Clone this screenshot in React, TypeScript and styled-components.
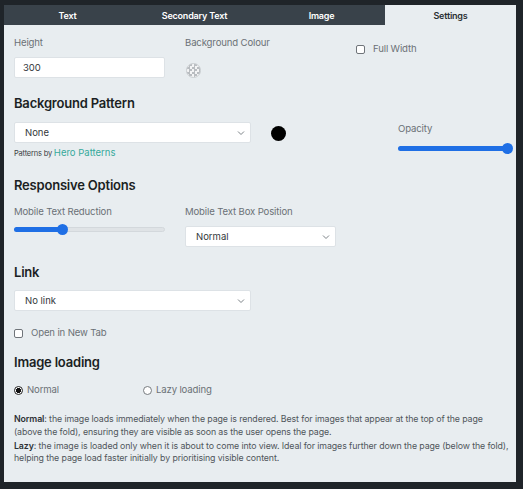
import { createGlobalStyle, styled } from 'styled-components';

const Global = createGlobalStyle`
  html, body { margin: 0; padding: 0; background: #1f2429; }
  body { font-family: Inter, 'Noto Sans', sans-serif; -webkit-font-smoothing: antialiased; }
  * { box-sizing: border-box; }
`;

const Page = styled.div`
  width: 523px;
  height: 489px;
  padding: 5px 7px 0 4px;
`;

const Panel = styled.div`
  background: #e8edf0;
  width: 512px;
  height: 477px;
`;

const Tabs = styled.div`
  display: flex;
  height: 20px;
  background: #39424a;
`;

const Tab = styled.div<{ $active?: boolean }>`
  flex: ${p => (p.$active ? '0 0 131px' : '1')};
  display: flex;
  align-items: center;
  justify-content: center;
  font-size: 9px;
  font-weight: 600;
  letter-spacing: -0.2px;
  color: ${p => (p.$active ? '#2a2f33' : '#ffffff')};
  background: ${p => (p.$active ? '#e8edf0' : 'transparent')};
`;

const Body = styled.div`
  padding: 11px 8px 0 10px;
`;

const Row = styled.div<{ $mt?: number }>`
  display: flex;
  align-items: flex-start;
  margin-top: ${p => p.$mt ?? 0}px;
`;

const Field = styled.div<{ $w: number; $ml?: number }>`
  width: ${p => p.$w}px;
  margin-left: ${p => p.$ml ?? 0}px;
  display: flex;
  flex-direction: column;
`;

const Label = styled.div`
  font-size: 9.6px;
  line-height: 14px;
  color: #6b7176;
  letter-spacing: -0.15px;
  margin-bottom: 7px;
`;

const TextInput = styled.div`
  height: 21px;
  background: #fff;
  border: 1px solid #dde2e6;
  border-radius: 2px;
  font-size: 9.5px;
  color: #33383c;
  display: flex;
  align-items: center;
  padding-left: 8px;
`;

const Swatch = styled.div`
  width: 15px;
  height: 15px;
  margin: 6px 0 0 1px;
  border-radius: 50%;
  border: 1px solid #c9cdd0;
  background: repeating-conic-gradient(#b9bdc1 0 25%, #f3f4f5 0 50%) 0 0 / 5px 5px;
`;

const Dot = styled.div`
  width: 15px;
  height: 15px;
  border-radius: 50%;
  background: #000;
  margin: 4px 0 0 20px;
`;

const Heading = styled.div<{ $mt: number }>`
  font-size: 13px;
  font-weight: 600;
  line-height: 20px;
  color: #1b1f23;
  letter-spacing: -0.2px;
  margin-top: ${p => p.$mt}px;
`;

const Select = styled.div<{ $w: number }>`
  width: ${p => p.$w}px;
  height: 21px;
  background: #fff;
  border: 1px solid #dde2e6;
  border-radius: 2px;
  display: flex;
  align-items: center;
  justify-content: space-between;
  padding: 0 5px 0 10px;
  font-size: 9.5px;
  color: #33383c;
`;

const Chevron = () => (
  <svg width="8" height="6" viewBox="0 0 8 6">
    <path d="M1 1.5 L4 4.5 L7 1.5" fill="none" stroke="#7d8388" strokeWidth="1" />
  </svg>
);

const Credit = styled.div`
  margin-top: 4px;
  font-size: 7.5px;
  line-height: 12px;
  color: #3a3f44;
  letter-spacing: -0.2px;
  span { color: #35a99b; font-size: 9.5px; letter-spacing: 0; }
`;

const Track = styled.div<{ $w: number }>`
  position: relative;
  width: ${p => p.$w}px;
  height: 5px;
  border-radius: 3px;
  background: #dfe3e6;
  border: 1px solid #d3d8dc;
`;

const Fill = styled.div`
  position: absolute;
  left: -1px;
  top: -1px;
  height: 5px;
  border-radius: 3px;
  background: #1f6fe5;
`;

const Thumb = styled.div`
  position: absolute;
  top: -4.5px;
  width: 11px;
  height: 11px;
  margin-left: -5.5px;
  border-radius: 50%;
  background: #1f6fe5;
`;

const SliderWrap = styled.div<{ $mt: number }>`
  margin-top: ${p => p.$mt}px;
`;

const Slider = ({ w, pct, mt }: { w: number; pct: number; mt: number }) => (
  <SliderWrap $mt={mt}>
    <Track $w={w}>
      <Fill style={{ width: `${pct}%` }} />
      <Thumb style={{ left: `${pct}%` }} />
    </Track>
  </SliderWrap>
);

const Check = styled.span`
  display: inline-block;
  width: 9px;
  height: 9px;
  border: 1px solid #6f7479;
  border-radius: 2px;
  background: #fff;
`;

const Choice = styled.label<{ $w?: number; $gap?: number; $mt?: number }>`
  display: flex;
  align-items: center;
  gap: ${p => p.$gap ?? 8}px;
  width: ${p => (p.$w ? `${p.$w}px` : 'auto')};
  margin-top: ${p => p.$mt ?? 0}px;
  font-size: 9.6px;
  line-height: 14px;
  color: #6b7176;
  letter-spacing: -0.15px;
`;

const Radio = styled.span<{ $on?: boolean }>`
  display: inline-block;
  width: 9px;
  height: 9px;
  border-radius: 50%;
  border: 1px solid ${p => (p.$on ? '#222' : '#777c80')};
  background: ${p => (p.$on ? 'radial-gradient(circle, #111 0 2.3px, #fff 2.8px)' : '#fff')};
`;

const Notes = styled.div`
  width: 500px;
  margin-top: 16px;
  font-size: 8.8px;
  line-height: 12.5px;
  color: #50565b;
  letter-spacing: -0.1px;
  p { margin: 0 0 1.5px; }
  b { color: #2c3135; font-weight: 600; }
`;

export default function App() {
  return (
    <Page>
      <Global />
      <Panel>
        <Tabs>
          <Tab>Text</Tab>
          <Tab>Secondary Text</Tab>
          <Tab>Image</Tab>
          <Tab $active>Settings</Tab>
        </Tabs>
        <Body>
          <Row>
            <Field $w={151}>
              <Label>Height</Label>
              <TextInput>300</TextInput>
            </Field>
            <Field $w={151} $ml={20}>
              <Label>Background Colour</Label>
              <Swatch />
            </Field>
            <Field $w={140} $ml={20}>
              <Choice $mt={6}>
                <Check />
                Full Width
              </Choice>
            </Field>
          </Row>

          <Heading $mt={15}>Background Pattern</Heading>
          <Row $mt={9}>
            <Field $w={237}>
              <Select $w={237}>
                None
                <Chevron />
              </Select>
              <Credit>
                Patterns by <span>Hero Patterns</span>
              </Credit>
            </Field>
            <Dot />
            <Field $w={110} $ml={112}>
              <Label>Opacity</Label>
              <Slider w={110} pct={100} mt={3} />
            </Field>
          </Row>

          <Heading $mt={15}>Responsive Options</Heading>
          <Row $mt={10}>
            <Field $w={151}>
              <Label>Mobile Text Reduction</Label>
              <Slider w={151} pct={32} mt={1} />
            </Field>
            <Field $w={151} $ml={20}>
              <Label>Mobile Text Box Position</Label>
              <Select $w={151}>
                Normal
                <Chevron />
              </Select>
            </Field>
          </Row>

          <Heading $mt={15}>Link</Heading>
          <Row $mt={8}>
            <Select $w={237}>
              No link
              <Chevron />
            </Select>
          </Row>
          <Row $mt={15}>
            <Choice>
              <Check />
              Open in New Tab
            </Choice>
          </Row>

          <Heading $mt={12}>Image loading</Heading>
          <Row $mt={11}>
            <Choice $w={129} $gap={4}>
              <Radio $on />
              Normal
            </Choice>
            <Choice $gap={4}>
              <Radio />
              Lazy loading
            </Choice>
          </Row>

          <Notes>
            <p>
              <b>Normal</b>: the image loads immediately when the page is rendered. Best for images that appear at the top of the page
              <br />
              (above the fold), ensuring they are visible as soon as the user opens the page.
            </p>
            <p>
              <b>Lazy</b>: the image is loaded only when it is about to come into view. Ideal for images further down the page (below the fold),
              <br />
              helping the page load faster initially by prioritising visible content.
            </p>
          </Notes>
        </Body>
      </Panel>
    </Page>
  );
}
